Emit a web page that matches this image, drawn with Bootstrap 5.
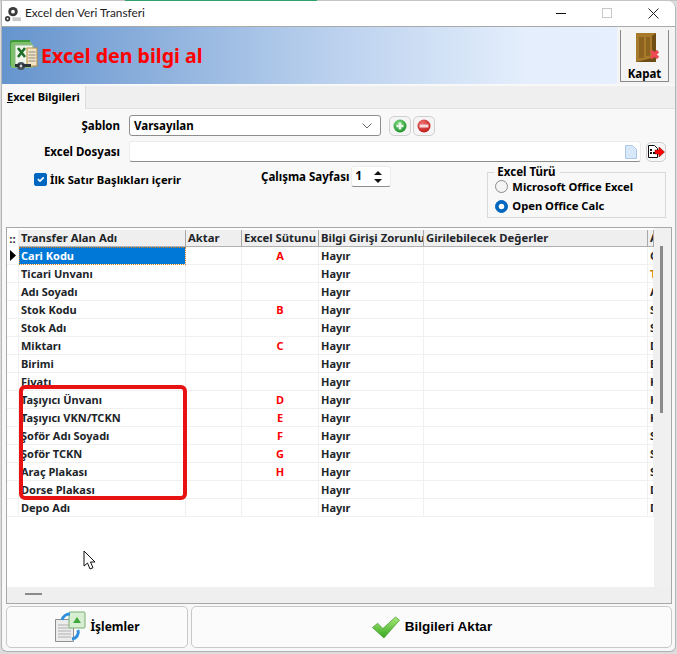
<!DOCTYPE html>
<html lang="tr">
<head>
<meta charset="utf-8">
<title>Excel den Veri Transferi</title>
<link href="https://cdn.jsdelivr.net/npm/bootstrap@5.3.0/dist/css/bootstrap.min.css" rel="stylesheet">
<style>
html,body{margin:0;height:654px;overflow:hidden;background:#dcdcdc}
body{font-family:"Noto Sans","DejaVu Sans",sans-serif;font-size:11px;font-weight:700;color:#000;line-height:1.2;position:relative}
.topstrip{height:1px;background:#c4c4c4;display:flex}
.topstrip i{display:block;margin-left:125px;width:192px;background:#2fa36b}
.win{margin-left:1px;width:675px;height:651px;background:#f8f8f8;border-left:1px solid #b5b5b5;border-right:1px solid #b5b5b5;border-bottom:1px solid #b0b0b0;border-top-right-radius:8px;border-bottom-left-radius:6px;border-bottom-right-radius:6px;overflow:hidden;display:flex;flex-direction:column;position:relative}
.titlebar{height:26px;flex:none;background:#fff;border-bottom:1px solid #a9a9a9;padding-left:2px}
.titlebar .ttl{font-family:Lato,sans-serif;font-weight:400;font-size:11.8px;margin-left:3px;color:#1c1c1c}
.winbtn{width:46px;height:25px;display:flex;align-items:center;justify-content:center;padding-left:2px}
.banner{height:57px;flex:none}
.bannerfill{background:linear-gradient(90deg,#6594cd 0%,#b5cdec 50%,#e4eefc 85%,#e6effd 100%);padding-left:5px}
.bannerfill h1{font-size:19.6px;font-weight:700;color:#f00;margin:0 0 0 2px;font-family:"Noto Sans",sans-serif}
.kapatbox{width:58px;background:#f4f4f4;padding:3px 6px 2px 3px}
.kapatin{height:100%;border:1px solid #8a8a8a;border-top:0;font-size:11.5px;line-height:1;padding-bottom:2px}
.doorimg{margin:0 0 5px 4px}
.tabstrip{height:23px;flex:none;background:#efefef;margin-top:2px;border-bottom:1px solid #e2e2e2;padding-left:0}
.tabstrip .nav-link{height:23px;width:84px;padding:4px 0 0 5px;border:0;border-right:1px solid #dcdcdc;border-radius:0;background:#f8f8f8;color:#000;font-size:11px;font-weight:700}
.formarea{height:118px;flex:none;padding-top:6px;position:relative}
.lbl{width:118px;text-align:right;font-size:11.5px;flex:none}
.selbox{width:252px;height:21px;margin-left:9px;border:1px solid #8d8d8d;border-radius:3px;background:#fff;padding:0 0 0 4px;flex:none;font-size:11.5px}
.tinybtn{width:22px;height:20px;border:1px solid #d0d0d0;border-radius:5px;background:#f5f5f5;padding:0;display:flex;align-items:center;justify-content:center;flex:none}
.tinybtn+.tinybtn{margin-left:2px}
.filerow{margin-top:5px}
.filebtn{width:20px;height:20px;margin-left:5px}
.filebox{width:512px;height:21px;margin-left:9px;border:1px solid #ececec;border-bottom-color:#8d8d8d;border-radius:3px;background:#fff;padding:0 3px;flex:none}
.form-check.checkrow{width:227px;min-height:0;margin:0 0 0 32px;padding:11px 0 0;flex:none;font-size:11.25px}
.form-check .chk{float:none;width:13px;height:13px;margin:0 3px 0 0;border-radius:2px;flex:none}
.chk:checked,.rad:checked{background-color:#0067c0;border-color:#0067c0}
.form-check.radrow{min-height:0;padding:0;margin:0}
.form-check .rad{float:none;width:13px;height:13px;margin:0 4px 0 0;flex:none;border:1px solid #8a8a8a;background-color:#f4f4f4}
.form-check .rad:checked{background-color:#0067c0;border-color:#0067c0}
.sheetgrp{margin-top:4px;font-size:11.5px}
.spinbox{width:40px;height:21px;margin-left:2px;background:#fff;border:1px solid #ececec;border-bottom-color:#8d8d8d;border-radius:3px;padding-left:3px;font-size:12px}
.grp{width:179px;height:46px;margin:10px 0 0 96px;border:1px solid #d8d8d8;padding:7px 0 0 7px;position:relative;font-size:11.2px}
.grp .radrow+.radrow{margin-top:6px}
.grplegend{position:absolute;top:-8px;left:6px;background:#f8f8f8;padding:0 4px 0 3px;font-size:11.5px;line-height:14px}
.gridframe{height:377px;flex:none;margin:0 3px 0 4px;border:1px solid #a8a8a8;display:flex;flex-direction:column;background:#efefef}
.gridmain{height:359px;flex:none;display:flex}
.gridcells{width:647px;height:359px;background:#fff;overflow:hidden;flex:none;padding-top:2px}
.vbar{flex:1;background:#f0f0f0;padding:18px 0 0 6px}
.vthumb{width:3px;height:167px;background:#8a8a8a}
.hbar{height:16px;flex:none;padding:6px 0 0 18px}
.hthumb{width:17px;height:2px;background:#8a8a8a}
table.xgrid{table-layout:fixed;width:647px;margin:0;border-collapse:separate;border-spacing:0;--bs-table-bg:transparent;font-size:11px}
table.xgrid th,table.xgrid td{padding:0 0 0 2px;height:18px;line-height:17px;white-space:nowrap;overflow:hidden;border:0;border-right:1px solid #f0f0f0;border-bottom:1px solid #f0f0f0;box-shadow:none}
table.xgrid th{height:17px;line-height:16px;background:#efefef;border-right:1px solid #a8a8a8;border-bottom:1px solid #b0b0b0;font-size:11.3px}
table.xgrid td.ind{background:#fff;padding:0}
table.xgrid td.ind svg{display:block}
table.xgrid th.ind{padding:0;text-align:center;background:#fff;border-right:1px solid #efefef;border-bottom:0}
table.xgrid td.letter{text-align:center;color:#f00;padding:0}
table.xgrid tr.cur td.nm{background:#0078d7;color:#fff;outline:1px dotted #d08020;outline-offset:-1px}
table.xgrid td.org{color:#d07a10}
.redmark{position:absolute;left:17px;top:384px;width:168px;height:115px;border:4px solid #e81212;border-radius:6px;pointer-events:none}
.cursor{position:absolute;left:83px;top:550px;width:14px;height:21px}
.footbar{height:42px;flex:none;margin:2px 3px 0 4px;gap:3px}
.fbtn{height:42px;border:1px solid #c8c8c8;border-radius:5px;background:#fbfbfb;padding:0;display:flex;align-items:center;justify-content:center;color:#000;font-weight:700}
.fbtn1{width:182px;font-size:12px}
.fbtn2{flex:1;font-family:"Liberation Sans",sans-serif;font-size:13.5px}
</style>
</head>
<body>
<div class="topstrip"><i></i></div>
<div class="win">
  <div class="titlebar d-flex align-items-center">
    <svg width="18" height="18" viewBox="0 0 19 19"><circle cx="9.500" cy="7" r="5" fill="#3a3a3a"/><circle cx="9.500" cy="7" r="2" fill="#fff"/><circle cx="3.800" cy="14.500" r="2.800" fill="#3a3a3a"/><circle cx="3.800" cy="14.500" r="1" fill="#fff"/><rect x="9" y="13" width="9" height="4" fill="#c9c9c9"/></svg>
    <span class="ttl flex-grow-1">Excel den Veri Transferi</span>
    <div class="winbtn"><svg width="11" height="11"><rect x="0" y="5" width="10" height="1" fill="#111"/></svg></div>
    <div class="winbtn"><svg width="11" height="11"><rect x=".5" y=".5" width="9" height="9" fill="none" stroke="#c8c8c8"/></svg></div>
    <div class="winbtn"><svg width="11" height="11"><path d="M.5.5l10 10M10.500.5l-10 10" stroke="#222" fill="none"/></svg></div>
  </div>
  <div class="banner d-flex">
    <div class="bannerfill flex-grow-1 d-flex align-items-center">
      <svg width="32" height="34" viewBox="0 0 32 34">
        <path d="M3 3 Q3 1 6 1 H23 V6 H8 V27 H3Z" fill="#3f9a3c"/><rect x="4" y="3" width="21" height="26" rx="2" fill="#7cc06a"/>
        <rect x="8" y="6" width="18" height="22" fill="#eef5ea" stroke="#8db58a"/>
        <path d="M11 9l7 9M18 9l-7 9" stroke="#1f6d28" stroke-width="2.600" fill="none"/>
        <rect x="20" y="9" width="10" height="18" fill="#f2e4c2" stroke="#b78f45"/><path d="M21.500 13h7M21.500 16h7M21.500 19h7M21.500 22h7" stroke="#8a8a8a"/>
        <circle cx="14" cy="27" r="4" fill="#48505a"/><rect x="8" y="25" width="16" height="3" fill="#2d3238"/><circle cx="14" cy="27" r="1.400" fill="#d5d5d5"/>
      </svg>
      <h1>Excel den bilgi al</h1>
    </div>
    <div class="kapatbox">
      <div class="kapatin d-flex flex-column align-items-center justify-content-end">
        <svg class="doorimg" width="26" height="31" viewBox="0 0 26 31"><rect x="2" y="1" width="20" height="29" fill="#6f4d14"/><path d="M2 1h20l-4 3v22l-16 4z" fill="#a77a2c"/><rect x="5" y="5" width="5" height="21" fill="#8c6420"/><rect x="12" y="5" width="4" height="19" fill="#8c6420"/><path d="M17 19l7 7m0-7l-7 7" stroke="#ee4a55" stroke-width="3.200"/></svg>
        <span>Kapat</span>
      </div>
    </div>
  </div>
  <ul class="nav tabstrip">
    <li class="nav-item"><a class="nav-link" href="#"><u>E</u>xcel Bilgileri</a></li>
  </ul>
  <div class="formarea">
    <div class="d-flex align-items-center">
      <div class="lbl">Şablon</div>
      <div class="selbox d-flex align-items-center justify-content-between"><span>Varsayılan</span>
        <svg class="me-2" width="10" height="6"><path d="M.5.5l4.500 4.500 4.500-4.500" fill="none" stroke="#666"/></svg></div>
      <button class="tinybtn ms-2" type="button" aria-label="Ekle"><svg width="14" height="14" viewBox="0 0 14 14"><defs><radialGradient id="gg" cx=".4" cy=".3" r=".8"><stop offset="0" stop-color="#7fd87f"/><stop offset="1" stop-color="#128a22"/></radialGradient><radialGradient id="gr" cx=".4" cy=".3" r=".8"><stop offset="0" stop-color="#f07070"/><stop offset="1" stop-color="#b80f0f"/></radialGradient></defs><circle cx="7" cy="7" r="6.500" fill="url(#gg)"/><path d="M7 3.500v7M3.500 7h7" stroke="#e8f7e8" stroke-width="2.600"/></svg></button>
      <button class="tinybtn" type="button" aria-label="Sil"><svg width="14" height="14" viewBox="0 0 14 14"><circle cx="7" cy="7" r="6.500" fill="url(#gr)"/><rect x="2.500" y="5.500" width="9" height="3" fill="#f6dada"/></svg></button>
    </div>
    <div class="d-flex align-items-center filerow">
      <div class="lbl">Excel Dosyası</div>
      <div class="filebox d-flex align-items-center justify-content-end"><svg width="12" height="14" viewBox="0 0 12 14"><path d="M.5.5h7l4 4v9h-11z" fill="#d8e8f8" stroke="#a9c8e8"/></svg></div>
      <button class="tinybtn filebtn" type="button" aria-label="Seç"><svg width="18" height="16" viewBox="0 0 18 16"><path d="M1.500 1.500h6l3 3v9h-9z" fill="#fff" stroke="#111"/><path d="M3 5h2v2H3zM3 8h2v2H3zM6 8h2v2H6z" fill="#111"/><path d="M8 6h4V3l5.500 5-5.500 5v-3H8z" fill="#f00" stroke="#700" stroke-width=".5"/></svg></button>
    </div>
    <div class="d-flex align-items-start">
      <div class="form-check checkrow d-flex align-items-center">
        <input class="form-check-input chk" type="checkbox" checked id="c1"><label for="c1">İlk Satır Başlıkları içerir</label>
      </div>
      <div class="d-flex align-items-center sheetgrp"><span>Çalışma Sayfası</span>
        <div class="spinbox d-flex align-items-center justify-content-between"><span>1</span>
          <svg class="me-2" width="8" height="14" viewBox="0 0 8 14"><path d="M4 1l4 4H0zM0 9h8l-4 4z" fill="#111"/></svg></div>
      </div>
      <div class="grp">
        <div class="grplegend">Excel Türü</div>
        <div class="form-check radrow d-flex align-items-center"><input class="form-check-input rad" type="radio" name="t" id="r1"><label for="r1">Microsoft Office Excel</label></div>
        <div class="form-check radrow d-flex align-items-center"><input class="form-check-input rad" type="radio" name="t" id="r2" checked><label for="r2">Open Office Calc</label></div>
      </div>
    </div>
  </div>
  <div class="gridframe">
    <div class="gridmain">
      <div class="gridcells">
        <table class="table xgrid">
          <colgroup><col style="width:12px"><col style="width:167px"><col style="width:56px"><col style="width:77px"><col style="width:105px"><col style="width:224px"><col style="width:6px"></colgroup>
          <thead><tr><th class="ind">::</th><th>Transfer Alan Adı</th><th>Aktar</th><th>Excel Sütunu</th><th>Bilgi Girişi Zorunlu</th><th>Girilebilecek Değerler</th><th>A</th></tr></thead>
          <tbody>
            <tr class="cur"><td class="ind"><svg width="12" height="17" viewBox="0 0 12 17"><path d="M3 3l6 5.500-6 5.500z" fill="#000"/></svg></td><td class="nm">Cari Kodu</td><td></td><td class="letter">A</td><td>Hayır</td><td></td><td>C</td></tr>
            <tr><td class="ind"></td><td>Ticari Unvanı</td><td></td><td></td><td>Hayır</td><td></td><td class="org">T</td></tr>
            <tr><td class="ind"></td><td>Adı Soyadı</td><td></td><td></td><td>Hayır</td><td></td><td>A</td></tr>
            <tr><td class="ind"></td><td>Stok Kodu</td><td></td><td class="letter">B</td><td>Hayır</td><td></td><td>S</td></tr>
            <tr><td class="ind"></td><td>Stok Adı</td><td></td><td></td><td>Hayır</td><td></td><td>S</td></tr>
            <tr><td class="ind"></td><td>Miktarı</td><td></td><td class="letter">C</td><td>Hayır</td><td></td><td>D</td></tr>
            <tr><td class="ind"></td><td>Birimi</td><td></td><td></td><td>Hayır</td><td></td><td>B</td></tr>
            <tr><td class="ind"></td><td>Fiyatı</td><td></td><td></td><td>Hayır</td><td></td><td>K</td></tr>
            <tr><td class="ind"></td><td>Taşıyıcı Ünvanı</td><td></td><td class="letter">D</td><td>Hayır</td><td></td><td>K</td></tr>
            <tr><td class="ind"></td><td>Taşıyıcı VKN/TCKN</td><td></td><td class="letter">E</td><td>Hayır</td><td></td><td>K</td></tr>
            <tr><td class="ind"></td><td>Şoför Adı Soyadı</td><td></td><td class="letter">F</td><td>Hayır</td><td></td><td>S</td></tr>
            <tr><td class="ind"></td><td>Şoför TCKN</td><td></td><td class="letter">G</td><td>Hayır</td><td></td><td>S</td></tr>
            <tr><td class="ind"></td><td>Araç Plakası</td><td></td><td class="letter">H</td><td>Hayır</td><td></td><td>S</td></tr>
            <tr><td class="ind"></td><td>Dorse Plakası</td><td></td><td></td><td>Hayır</td><td></td><td>D</td></tr>
            <tr><td class="ind"></td><td>Depo Adı</td><td></td><td></td><td>Hayır</td><td></td><td>D</td></tr>
          </tbody>
        </table>
      </div>
      <div class="vbar"><div class="vthumb"></div></div>
    </div>
    <div class="hbar"><div class="hthumb"></div></div>
  </div>
  <div class="footbar d-flex">
    <button class="fbtn fbtn1" type="button"><svg class="me-1" width="32" height="32" viewBox="0 0 32 32"><path d="M1.500 8.500h14l4 4v18h-18z" fill="#ececec" stroke="#8f8f8f"/><path d="M4 14h11M4 17h13M4 20h13M4 23h13M4 26h13" stroke="#b0b0b0"/><rect x="15" y="1" width="16" height="16" rx="1" fill="#d8eed2" stroke="#78b070"/><path d="M19 12l4-6 4 6z" fill="#3ea83a"/><path d="M8 9a8 8 0 0 1 8-6" fill="none" stroke="#2f8fdd" stroke-width="3"/><path d="M24 19a7 7 0 0 1-6 9" fill="none" stroke="#2f8fdd" stroke-width="3"/></svg><span>İşlemler</span></button>
    <button class="fbtn fbtn2" type="button"><svg class="me-1" width="30" height="23" viewBox="0 0 28 22"><defs><linearGradient id="g1" x1="0" y1="0" x2="0" y2="1"><stop offset="0" stop-color="#a8e87a"/><stop offset="1" stop-color="#36a81e"/></linearGradient></defs><path d="M1 11l5-4 5 5L23 1l4 3-15 17z" fill="url(#g1)" stroke="#4d9a38" stroke-width=".7"/></svg><span>Bilgileri Aktar</span></button>
  </div>
  <div class="redmark"></div>
</div>
<svg class="cursor" viewBox="0 0 14 21"><path d="M1 1v15l3.500-3 2.500 6 3-1.300-2.500-5.700H12z" fill="#fff" stroke="#111"/></svg>
</body>
</html>
